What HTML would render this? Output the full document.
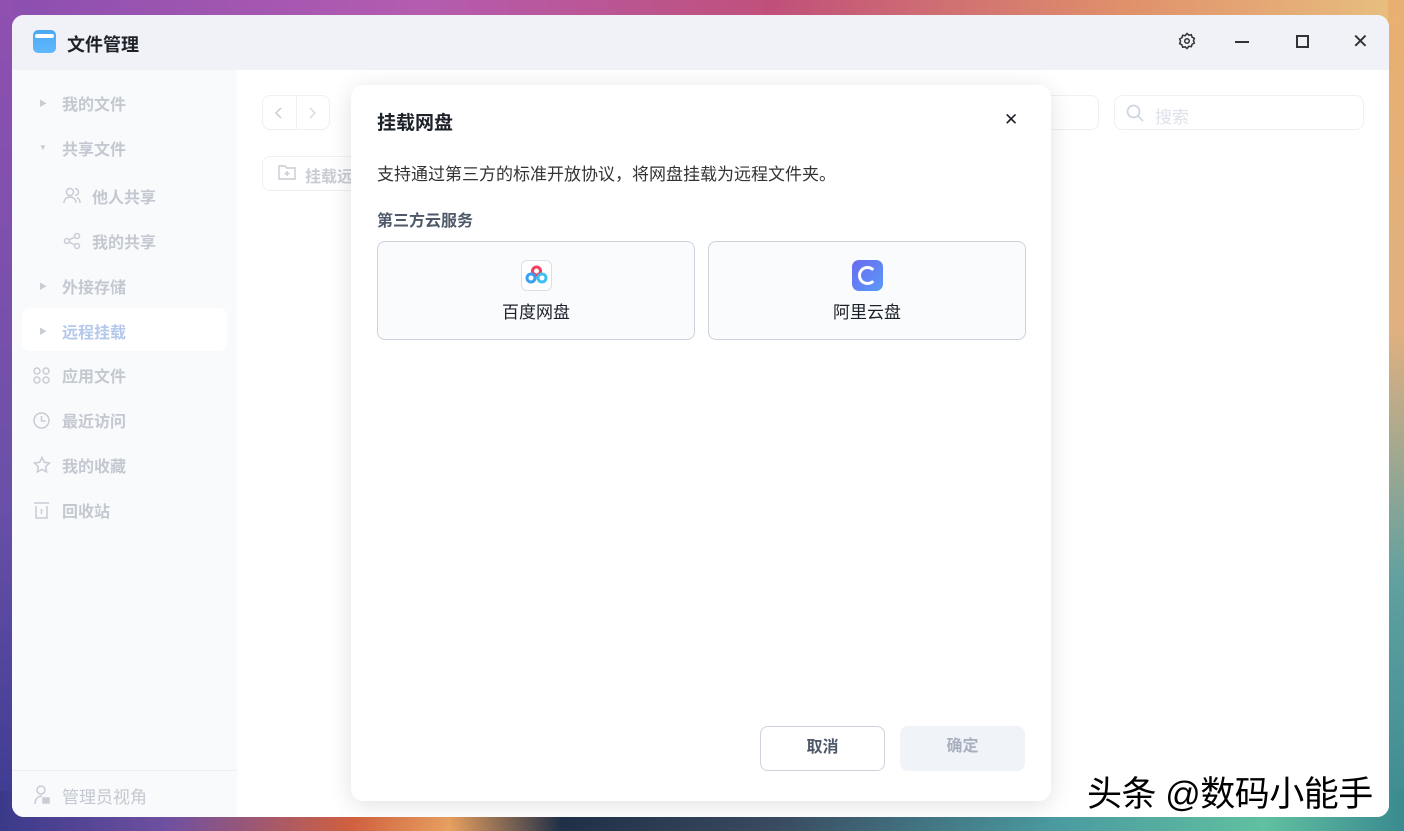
<!DOCTYPE html>
<html><head><meta charset="utf-8"><style>
*{margin:0;padding:0;box-sizing:border-box}
body{width:1404px;height:831px;overflow:hidden;position:relative;font-family:"Liberation Sans","Noto Sans CJK SC",sans-serif;
background:linear-gradient(90deg,#8a4fb0 0%,#b45cb0 30%,#c0507a 55%,#e0906a 80%,#e8c080 100%);}
.bot{position:absolute;left:0;right:0;bottom:0;height:40px;background:linear-gradient(90deg,#3a3a8a 0%,#7050a0 12%,#d06040 25%,#e8a060 32%,#203048 40%,#3a4a60 55%,#4a9aa0 75%,#60c0a0 90%,#3a8a90 100%)}
.left{position:absolute;left:0;top:0;bottom:0;width:14px;background:linear-gradient(180deg,#9050b0,#6a50a8 60%,#3a3a90)}
.right{position:absolute;right:0;top:0;bottom:0;width:16px;background:linear-gradient(180deg,#e8b070,#e0b080 40%,#60a0a0 70%,#3a8a90)}
.win{position:absolute;left:12px;top:15px;width:1377px;height:802px;background:#fff;border-radius:12px;overflow:hidden}
.title{height:55px;background:#f1f2f7;position:relative}
.title .ic{position:absolute;left:21px;top:15px;width:23px;height:23px;border-radius:5px;background:linear-gradient(180deg,#4aa8f0,#60b8ff)}
.title .ic:after{content:"";position:absolute;left:2px;top:4px;width:19px;height:4px;background:#fff;border-radius:2px}
.title .t{position:absolute;left:55px;top:16px;font-size:18px;font-weight:bold;color:#1d2129}
.side{position:absolute;left:0;top:55px;width:225px;bottom:0;background:#f9fafc}
.it{position:absolute;font-size:16px;color:#c4c8d0;left:50px;font-weight:bold}
.arr{position:absolute;left:27px;font-size:8px;color:#c8ccd4}
.si{position:absolute;left:21px}
.main{position:absolute;left:225px;top:55px;right:0;bottom:0;background:#fff}
.box{position:absolute;border:1px solid #eef0f4;border-radius:8px}
.dlg{position:absolute;left:351px;top:85px;width:700px;height:716px;background:#fff;border-radius:12px;box-shadow:0 4px 24px rgba(0,0,0,.12)}
.card{position:absolute;top:156px;width:318px;height:99px;border:1px solid #ccd3dd;border-radius:8px;background:#f9fbfd;text-align:center;font-size:17px;color:#1d2129}
.btn{position:absolute;top:641px;width:125px;height:45px;border-radius:8px;font-size:16px;font-weight:bold;text-align:center;line-height:41px}
</style></head><body>
<div class="left"></div><div class="right"></div><div class="bot"></div>
<div class="win">
 <div class="title"><div class="ic"></div><div class="t">文件管理</div>
  <svg style="position:absolute;left:1166px;top:17px" width="18" height="18" viewBox="0 0 24 24" fill="none" stroke="#333" stroke-width="2"><path d="M12 2l2.5 2.2 3.3-.5 1 3.2 3 1.6-1.2 3.1 1.2 3.1-3 1.6-1 3.2-3.3-.5L12 22l-2.5-2.2-3.3.5-1-3.2-3-1.6 1.2-3.1L2.2 9.3l3-1.6 1-3.2 3.3.5z"/><circle cx="12" cy="12" r="3"/></svg>
  <div style="position:absolute;left:1223px;top:26px;width:14px;height:2px;background:#333"></div>
  <div style="position:absolute;left:1284px;top:20px;width:13px;height:13px;border:2px solid #333"></div>
  <div style="position:absolute;left:1340px;top:14px;font-size:20px;color:#333">✕</div>
 </div>
 <div class="side">
  <div class="arr" style="top:28px">▶</div><div class="it" style="top:21px">我的文件</div>
  <div class="arr" style="top:73px">▼</div><div class="it" style="top:66px">共享文件</div>
  <div class="it" style="top:114px;left:80px">他人共享</div>
  <svg class="si" style="left:51px;top:116px" width="18" height="18" viewBox="0 0 18 18" fill="none" stroke="#c8ccd4" stroke-width="1.5"><circle cx="7" cy="6" r="3.5"/><path d="M1 17c0-4 3-6 6-6s6 2 6 6M12 2.5a3.5 3.5 0 010 7M14 11.5c2 1 3 3 3 5.5"/></svg>
  <div class="it" style="top:159px;left:80px">我的共享</div>
  <svg class="si" style="left:51px;top:162px" width="18" height="18" viewBox="0 0 18 18" fill="none" stroke="#c8ccd4" stroke-width="1.5"><circle cx="4" cy="9" r="2.5"/><circle cx="14" cy="4" r="2.5"/><circle cx="14" cy="14" r="2.5"/><path d="M6 8l6-3M6 10l6 3"/></svg>
  <div class="arr" style="top:211px">▶</div><div class="it" style="top:204px">外接存储</div>
  <div style="position:absolute;left:10px;top:238px;width:205px;height:43px;background:#fff;border-radius:8px"></div>
  <div class="arr" style="top:256px">▶</div><div class="it" style="top:249px;color:#b4c8ec">远程挂载</div>
  <div class="it" style="top:293px">应用文件</div>
  <svg class="si" style="top:297px" width="17" height="17" viewBox="0 0 17 17" fill="none" stroke="#c8ccd4" stroke-width="1.5"><circle cx="4" cy="4" r="3"/><circle cx="13" cy="4" r="3"/><circle cx="4" cy="13" r="3"/><circle cx="13" cy="13" r="3"/></svg>
  <div class="it" style="top:338px">最近访问</div>
  <svg class="si" style="top:342px" width="17" height="17" viewBox="0 0 17 17" fill="none" stroke="#c8ccd4" stroke-width="1.5"><circle cx="8.5" cy="8.5" r="7.5"/><path d="M8.5 4v5h4"/></svg>
  <div class="it" style="top:383px">我的收藏</div>
  <svg class="si" style="top:386px" width="18" height="18" viewBox="0 0 18 18" fill="none" stroke="#c8ccd4" stroke-width="1.5"><path d="M9 1.5l2.3 4.8 5.2.7-3.8 3.6.9 5.2L9 13.3l-4.6 2.5.9-5.2L1.5 7l5.2-.7z"/></svg>
  <div class="it" style="top:428px">回收站</div>
  <svg class="si" style="top:431px" width="17" height="18" viewBox="0 0 17 18" fill="none" stroke="#c8ccd4" stroke-width="1.5"><path d="M1 2h15M3 5v12h11V5M8.5 8v5"/></svg>
  <div style="position:absolute;left:0;right:0;top:700px;border-top:1px solid #eef0f4"></div>
  <div class="it" style="top:713px;font-weight:normal;font-size:17px">管理员视角</div>
  <svg class="si" style="left:22px;top:715px" width="16" height="20" viewBox="0 0 16 20" fill="none" stroke="#c8ccd4" stroke-width="1.5"><circle cx="7" cy="5" r="4"/><path d="M1 19c0-5 3-8 7-8"/><rect x="9" y="13" width="6" height="5" fill="#c8ccd4"/></svg>
 </div>
 <div class="main">
  <div class="box" style="left:25px;top:25px;width:68px;height:35px"></div>
  <div style="position:absolute;left:59px;top:26px;width:1px;height:33px;background:#eef0f4"></div>
  <svg style="position:absolute;left:37px;top:36px" width="10" height="14" viewBox="0 0 10 14" fill="none" stroke="#c8ccd4" stroke-width="1.5"><path d="M7 2L2 7l5 5"/></svg>
  <svg style="position:absolute;left:70px;top:36px" width="10" height="14" viewBox="0 0 10 14" fill="none" stroke="#d8dce2" stroke-width="1.5"><path d="M3 2l5 5-5 5"/></svg>
  <div class="box" style="left:25px;top:86px;width:120px;height:35px"></div>
  <svg style="position:absolute;left:41px;top:94px" width="18" height="16" viewBox="0 0 18 16" fill="none" stroke="#c8ccd4" stroke-width="1.4"><path d="M1 2h6l1.5 2H17v11H1zM9 7v5M6.5 9.5h5"/></svg>
  <div style="position:absolute;left:68px;top:93px;color:#c8ccd4;font-size:16px;font-weight:bold">挂载远程</div>
  <div class="box" style="left:700px;top:25px;width:162px;height:35px"></div>
  <div class="box" style="left:877px;top:25px;width:250px;height:35px"></div>
  <svg style="position:absolute;left:889px;top:34px" width="18" height="18" viewBox="0 0 18 18" fill="none" stroke="#d0d6e0" stroke-width="1.8"><circle cx="7.5" cy="7.5" r="6"/><path d="M12 12l5 5"/></svg>
  <div style="position:absolute;left:918px;top:33px;color:#dde1e8;font-size:17px">搜索</div>
 </div>
</div>
<div class="dlg">
 <div style="position:absolute;left:26px;top:23px;font-size:19px;font-weight:bold;color:#1d2129">挂载网盘</div>
 <div style="position:absolute;left:653px;top:25px;font-size:17px;color:#1d2129">✕</div>
 <div style="position:absolute;left:26px;top:75px;font-size:17px;color:#333">支持通过第三方的标准开放协议，将网盘挂载为远程文件夹。</div>
 <div style="position:absolute;left:26px;top:122px;font-size:16px;font-weight:bold;color:#4e5969">第三方云服务</div>
 <div class="card" style="left:26px">
  <div style="position:absolute;left:143px;top:18px;width:31px;height:31px;border:1px solid #dde;border-radius:6px;background:#fff">
   <svg width="29" height="29" viewBox="0 0 29 29"><circle cx="14.5" cy="10" r="4" fill="none" stroke="#f04060" stroke-width="3"/><circle cx="9" cy="17" r="4" fill="none" stroke="#3aa0f0" stroke-width="3"/><circle cx="20" cy="17" r="4" fill="none" stroke="#40c0f0" stroke-width="3"/></svg></div>
  <div style="position:absolute;left:0;right:0;top:56px">百度网盘</div>
 </div>
 <div class="card" style="left:357px">
  <div style="position:absolute;left:143px;top:18px;width:31px;height:31px;border-radius:7px;background:linear-gradient(135deg,#6a6af0,#5a9af8)">
   <div style="position:absolute;left:6px;top:6px;width:19px;height:19px;border:3px solid #fff;border-radius:50%;border-right-color:transparent"></div></div>
  <div style="position:absolute;left:0;right:0;top:56px">阿里云盘</div>
 </div>
 <div class="btn" style="left:409px;border:1px solid #ccd3dd;color:#4e5969;background:#fff">取消</div>
 <div class="btn" style="left:549px;background:#f0f3f8;color:#a8b0c0">确定</div>
</div>
<div style="position:absolute;left:1087px;top:766px;font-size:35px;color:#000;letter-spacing:-0.5px;text-shadow:1px 1px 0 #fff,-1px -1px 0 #fff">头条 @数码小能手</div>
</body></html>
